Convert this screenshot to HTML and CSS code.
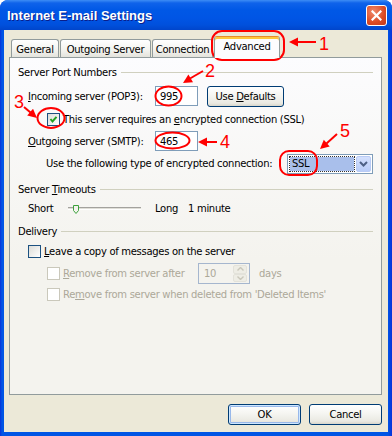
FILE: index.html
```html
<!DOCTYPE html>
<html lang="en">
<head>
  <meta charset="UTF-8">
  <meta name="viewport" content="width=device-width, initial-scale=1.0">
  <title>Internet E-mail Settings</title>
  <link rel="stylesheet" href="styles.css">
</head>
<body>
  <div class="window">
    <div class="titlebar">
      <span class="title">Internet E-mail Settings</span>
      <button class="close" aria-label="Close">
        <svg width="11" height="11" viewBox="0 0 11 11"><path d="M1.5 1.5 L9.5 9.5 M9.5 1.5 L1.5 9.5" stroke="#fff" stroke-width="2.2" stroke-linecap="square"/></svg>
      </button>
    </div>

    <div class="client">
      <div class="tabs">
        <div class="tab tab-general">General</div>
        <div class="tab tab-outgoing">Outgoing Server</div>
        <div class="tab tab-connection">Connection</div>
        <div class="tab tab-advanced active">Advanced</div>
      </div>

      <div class="panel">
        <div class="group g-ports"><span>Server Port Numbers</span></div>

        <div class="row row-incoming">
          <span class="label"><u>I</u>ncoming server (POP3):</span>
          <div class="field">995</div>
          <button class="btn btn-defaults">Use <u>D</u>efaults</button>
        </div>

        <div class="row row-ssl">
          <span class="cb checked">
            <svg width="11" height="11" viewBox="0 0 11 11"><path d="M2.5 5 L4.5 7.5 L8.5 2.8" fill="none" stroke="#21A121" stroke-width="2"/></svg>
          </span>
          <span class="cb-text">This server requires an <u>e</u>ncrypted connection (SSL)</span>
        </div>

        <div class="row row-outgoing">
          <span class="label"><u>O</u>utgoing server (SMTP):</span>
          <div class="field">465</div>
        </div>

        <div class="row row-enc">
          <span class="label-enc">Use the following type of encrypted connection:</span>
          <div class="select">
            <span class="value">SSL</span>
            <span class="drop">
              <svg width="9" height="6" viewBox="0 0 9 6"><path d="M1 1 L4.5 4.5 L8 1" fill="none" stroke="#4D6185" stroke-width="2"/></svg>
            </span>
          </div>
        </div>

        <div class="group g-timeouts"><span>Server <u>T</u>imeouts</span></div>

        <div class="row row-slider">
          <span class="short">Short</span>
          <div class="track">
            <svg class="thumb" width="6" height="9" viewBox="0 0 6 9"><path d="M0.5 0.5 H5.5 V5.5 L3 8.5 L0.5 5.5 Z" fill="#F4F3EE" stroke="#3DA33D"/></svg>
          </div>
          <span class="long">Long</span>
          <span>1 minute</span>
        </div>

        <div class="group g-delivery"><span>Delivery</span></div>

        <div class="row row-leave">
          <span class="cb"></span>
          <span class="cb-text"><u>L</u>eave a copy of messages on the server</span>
        </div>

        <div class="row row-after disabled">
          <span class="cb"></span>
          <span class="cb-text after-text"><u>R</u>emove from server after</span>
          <div class="spin">
            <span class="spin-value">10</span>
            <span class="spin-btns">
              <span class="spin-btn"><svg width="7" height="4" viewBox="0 0 7 4"><path d="M0.5 3.5 L3.5 0.5 L6.5 3.5" fill="none" stroke="#C9C7BA" stroke-width="1.4"/></svg></span>
              <span class="spin-btn"><svg width="7" height="4" viewBox="0 0 7 4"><path d="M0.5 0.5 L3.5 3.5 L6.5 0.5" fill="none" stroke="#C9C7BA" stroke-width="1.4"/></svg></span>
            </span>
          </div>
          <span class="days">days</span>
        </div>

        <div class="row row-deleted disabled">
          <span class="cb"></span>
          <span class="cb-text">Re<u>m</u>ove from server when deleted from 'Deleted Items'</span>
        </div>
      </div>

      <div class="buttons">
        <button class="btn btn-ok">OK</button>
        <button class="btn btn-cancel">Cancel</button>
      </div>
    </div>

    <!-- red callouts drawn over the dialog -->
    <svg class="marks" width="392" height="436" viewBox="0 0 392 436">
      <g fill="none" stroke="#FF0000" stroke-width="2">
        <rect x="212" y="31" width="72" height="29" rx="10"/>
        <ellipse cx="168.5" cy="96" rx="13" ry="9.5"/>
        <ellipse cx="51" cy="118" rx="13.5" ry="10"/>
        <ellipse cx="172.5" cy="140.5" rx="17" ry="8"/>
        <rect x="280" y="151" width="37" height="24" rx="9"/>
        <line x1="316" y1="42" x2="297" y2="42"/>
        <line x1="203" y1="71" x2="190" y2="78.5"/>
        <line x1="24" y1="107" x2="30.5" y2="112.5"/>
        <line x1="217" y1="142" x2="206" y2="142"/>
        <line x1="337" y1="134" x2="326.5" y2="143.5"/>
      </g>
      <g fill="#FF0000">
        <polygon points="289,42 298,37.5 298,46.5"/>
        <polygon points="183,83 193,82.2 188.4,74.5"/>
        <polygon points="37,118 27.2,115.6 33,108.8"/>
        <polygon points="198,142 207,137.5 207,146.5"/>
        <polygon points="320,149 329.7,146.4 323.8,139.7"/>
      </g>
      <g class="nums" fill="#FF0000">
        <text x="319" y="50">1</text>
        <text x="205" y="77">2</text>
        <text x="14" y="108">3</text>
        <text x="220" y="148">4</text>
        <text x="340" y="137">5</text>
      </g>
    </svg>
  </div>
</body>
</html>
```

FILE: styles.css
```css
body {
  margin: 0;
  background: #fff;
  font-family: "DejaVu Sans", sans-serif;
  font-size: 10px;
  letter-spacing: -0.3px;
  color: #000;
}
u {
  text-underline-offset: 1px;
}
.window {
  position: relative;
  width: 392px;
  height: 436px;
  display: flex;
  flex-direction: column;
  background: linear-gradient(to right, #0831D9, #0055E5 2px, #0055E5 388px, #0831D9);
  border-radius: 8px 8px 0 0;
  overflow: hidden;
}
.titlebar {
  flex: none;
  height: 30px;
  display: flex;
  align-items: center;
  justify-content: space-between;
  padding: 0 5px 0 7px;
  background: linear-gradient(#3D8DF5 0, #0F63EA 3px, #0058E6 10px, #0055E5 18px, #0050DC 25px, #0045CB 30px);
}
.title {
  font: bold 13px "Liberation Sans", sans-serif;
  letter-spacing: 0;
  color: #fff;
  text-shadow: 1px 1px 0 #0A1E8A;
  margin-top: 1px;
}
.close {
  width: 21px;
  height: 21px;
  padding: 0;
  display: flex;
  align-items: center;
  justify-content: center;
  border: 1px solid #fff;
  border-radius: 3px;
  background: radial-gradient(circle at 35% 30%, #F0896A, #DA4A24 60%, #C2391A);
}
.client {
  flex: 1;
  margin: 0 4px 4px;
  padding: 6px 6px 0 5px;
  background: #ECE9D8;
  display: flex;
  flex-direction: column;
}

/* tabs */
.tabs {
  height: 21px;
  display: flex;
  align-items: flex-end;
  gap: 1px;
  padding-left: 2px;
}
.tab {
  height: 18px;
  box-sizing: border-box;
  border: 1px solid #919B9C;
  border-bottom: none;
  border-radius: 3px 3px 0 0;
  background: linear-gradient(#FFFFFF, #F3F3EF 60%, #E4E3DC);
  display: flex;
  align-items: center;
  justify-content: center;
  padding-top: 1px;
}
.tab-general { width: 48px; }
.tab-outgoing { width: 91px; }
.tab-connection { width: 61px; }
.tab-advanced { width: 66px; }
.tab.active {
  height: 22px;
  margin-bottom: -1px;
  position: relative;
  z-index: 1;
  border-top: 1px solid #E68B2C;
  box-shadow: inset 0 2px 0 #FFC73C;
  background: #FCFCFE;
  padding-top: 0;
  padding-bottom: 2px;
}

/* panel */
.panel {
  width: 373px;
  height: 338px;
  box-sizing: border-box;
  border: 1px solid #919B9C;
  background: linear-gradient(#FCFCFE, #F4F3EE 60%, #F4F3EE);
}
.group {
  height: 13px;
  display: flex;
  align-items: center;
  margin: 0 8px 0 8px;
}
.group::after {
  content: "";
  flex: 1;
  height: 1px;
  margin-left: 4px;
  background: #D0D0BF;
}
.g-ports { margin-top: 8px; }
.g-timeouts { margin-top: 9px; }
.g-delivery { margin-top: 10px; }

.row {
  display: flex;
  align-items: center;
  padding-left: 18px;
}
.label {
  width: 127px;
}
.field {
  width: 43px;
  height: 20px;
  box-sizing: border-box;
  border: 1px solid #7F9DB9;
  background: #fff;
  padding-left: 4px;
  display: flex;
  align-items: center;
}
.row-incoming { margin-top: 6px; height: 22px; }
.row-ssl { margin-top: 6px; height: 13px; padding-left: 37px; }
.row-outgoing { margin-top: 5px; height: 20px; }
.row-enc { margin-top: 2px; height: 21px; padding-left: 36px; }
.row-slider { margin-top: 6px; height: 13px; }
.row-leave { margin-top: 7px; height: 13px; }
.row-after { margin-top: 5px; height: 21px; padding-left: 37px; }
.row-deleted { margin-top: 4px; height: 13px; padding-left: 37px; }

.btn {
  padding: 0;
  font-family: "DejaVu Sans", sans-serif;
  font-size: 10px;
  letter-spacing: -0.3px;
  color: #000;
  border: 1px solid #003C74;
  border-radius: 3px;
  background: linear-gradient(#FFFFFF, #F5F5F1 45%, #EAE9E2 85%, #D8D6CB);
}
.btn-defaults {
  width: 77px;
  height: 21px;
  margin-left: 9px;
}

/* checkboxes */
.cb {
  flex: none;
  width: 13px;
  height: 13px;
  box-sizing: border-box;
  border: 1px solid #1C5180;
  background: linear-gradient(135deg, #DCDCD7, #FFFFFF);
  display: flex;
  align-items: center;
  justify-content: center;
}
.cb-text {
  margin-left: 3px;
}
.disabled {
  color: #ACA899;
}
.disabled .cb {
  border-color: #CAC8BB;
  background: #FFFFFF;
}

/* combo */
.label-enc {
  width: 241px;
}
.select {
  width: 86px;
  height: 20px;
  box-sizing: border-box;
  border: 1px solid #7F9DB9;
  background: #fff;
  display: flex;
  align-items: center;
  padding: 1px;
}
.select .value {
  flex: 1;
  height: 14px;
  margin: 0 2px 0 1px;
  padding-left: 2px;
  background: #A9BFEB;
  outline: 1px dotted #333;
  display: flex;
  align-items: center;
}
.select .drop {
  width: 15px;
  height: 16px;
  box-sizing: border-box;
  border: 1px solid #B9CBF5;
  border-radius: 2px;
  background: linear-gradient(#D4E0FD, #B9CDF8);
  display: flex;
  align-items: center;
  justify-content: center;
}

/* slider */
.short {
  width: 40px;
}
.track {
  position: relative;
  width: 73px;
  height: 3px;
  box-sizing: border-box;
  border-top: 1px solid #A3A29E;
  border-bottom: 1px solid #FFFFFF;
  background: #E0DFD8;
  margin-top: -1px;
}
.thumb {
  position: absolute;
  left: 5px;
  top: -3px;
}
.long {
  margin-left: 14px;
  width: 33px;
}

/* spinner */
.after-text {
  width: 135px;
}
.spin {
  width: 52px;
  height: 21px;
  box-sizing: border-box;
  border: 1px solid #A5B6CE;
  background: #F4F3EE;
  display: flex;
  align-items: center;
  justify-content: space-between;
  padding: 1px 2px 1px 5px;
}
.spin-btns {
  width: 14px;
  height: 17px;
  display: flex;
  flex-direction: column;
}
.spin-btn {
  flex: 1;
  border: 1px solid #E3E2DA;
  border-radius: 2px;
  background: #EEEDE5;
  display: flex;
  align-items: center;
  justify-content: center;
}
.days {
  margin-left: 9px;
}

/* dialog buttons */
.buttons {
  display: flex;
  justify-content: flex-end;
  gap: 8px;
  margin-top: 9px;
}
.btn-ok,
.btn-cancel {
  width: 73px;
  height: 21px;
}
.btn-ok {
  box-shadow: inset 0 0 0 1px #CEE7FF, inset 0 0 0 2px #98B8EA;
}

.marks {
  position: absolute;
  left: 0;
  top: 0;
  pointer-events: none;
}
.nums text {
  font: 18px "Liberation Sans", sans-serif;
  letter-spacing: 0;
}
```
